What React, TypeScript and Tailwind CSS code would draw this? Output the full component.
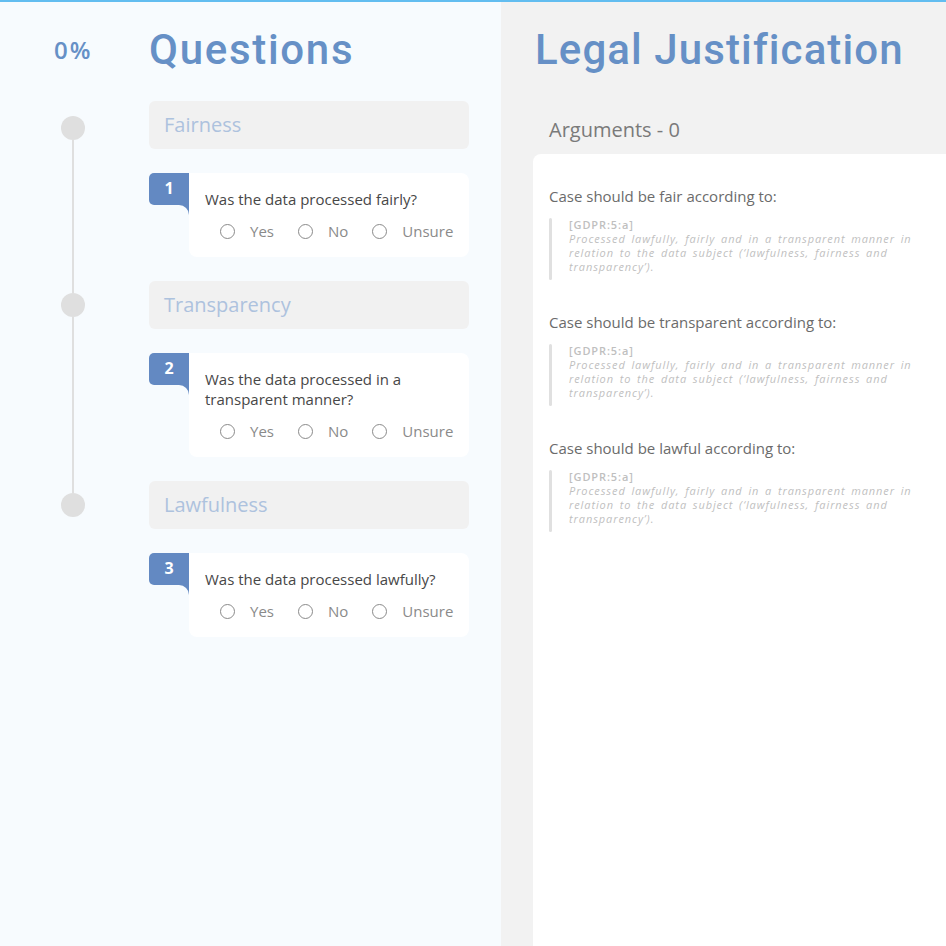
import React from 'react';

const questions = [
  { id: 1, category: 'Fairness', text: 'Was the data processed fairly?' },
  { id: 2, category: 'Transparency', text: 'Was the data processed in a transparent manner?' },
  { id: 3, category: 'Lawfulness', text: 'Was the data processed lawfully?' },
];

const justifications = ['fair', 'transparent', 'lawful'];

function Radio({ label }: { label: string }) {
  return (
    <label className="flex items-center gap-[15px]">
      <span className="h-[15px] w-[15px] shrink-0 rounded-full border border-[#8a8a8a] bg-white" />
      <span className="text-[15px] leading-[22px] text-[#8a8a8a]">{label}</span>
    </label>
  );
}

function QuestionCard({ id, text }: { id: number; text: string }) {
  return (
    <div className="flex">
      <div className="flex w-10 shrink-0 flex-col">
        <div className="flex h-8 justify-center rounded-l-[5px] bg-[#6389c2] pt-[5px] text-[16px] font-bold leading-[20px] text-white">
          {id}
        </div>
        <div className="h-[10px] w-[10px] self-end bg-[#6389c2]">
          <div className="h-full w-full rounded-tr-[10px] bg-[#f7fbfe]" />
        </div>
      </div>
      <div className="min-w-0 flex-1 rounded-r-lg rounded-bl-lg bg-white px-4 pb-[15px] pt-4">
        <p className="pr-4 text-[15px] leading-5 text-[#474747]">{text}</p>
        <div className="mt-[11px] flex gap-6 pl-[15px]">
          <Radio label="Yes" />
          <Radio label="No" />
          <Radio label="Unsure" />
        </div>
      </div>
    </div>
  );
}

export default function App() {
  return (
    <div className="flex min-h-screen flex-col font-['Open_Sans',sans-serif]">
      <div className="h-[2px] bg-[#62bdf0]" />
      <div className="flex flex-1">
        {/* questions */}
        <main className="w-[501px] bg-[#f7fbfe] pb-10">
          <header className="flex items-center pt-[23px]">
            <span className="w-[149px] pl-[54px] text-[24px] font-semibold tracking-[2px] text-[#6690c6]">
              0%
            </span>
            <h1 className="font-['Roboto',sans-serif] text-[42px] font-medium leading-[50px] tracking-[1.7px] text-[#6690c6]">
              Questions
            </h1>
          </header>
          <div className="flex pt-[26px]">
            <div className="ml-[61px] mr-[64px] flex w-6 flex-col items-center pt-[15px]">
              <span className="h-6 w-6 rounded-full bg-[#dfdfdf]" />
              <span className="h-[153px] w-0.5 bg-[#dfdfdf]" />
              <span className="h-6 w-6 rounded-full bg-[#dfdfdf]" />
              <span className="h-[176px] w-0.5 bg-[#dfdfdf]" />
              <span className="h-6 w-6 rounded-full bg-[#dfdfdf]" />
            </div>
            <div className="flex w-[320px] flex-col gap-6">
              {questions.map(q => (
                <React.Fragment key={q.id}>
                  <div className="flex h-12 items-center rounded-md bg-[#f1f1f1] px-[15px] text-[20px] text-[#adc2de]">
                    {q.category}
                  </div>
                  <QuestionCard id={q.id} text={q.text} />
                </React.Fragment>
              ))}
            </div>
          </div>
        </main>

        {/* legal justification */}
        <aside className="flex flex-1 flex-col bg-[#f2f2f2] pl-8">
          <h1 className="pl-[2px] pt-[23px] font-['Roboto',sans-serif] text-[42px] font-medium leading-[50px] tracking-[1.1px] text-[#6690c6]">
            Legal Justification
          </h1>
          <h2 className="mt-[41px] pl-4 text-[20px] leading-7 text-[#7a7a7a]">Arguments - 0</h2>
          <section className="mt-[10px] flex-1 rounded-tl-lg bg-white pl-4 pr-4 pt-8">
            {justifications.map(j => (
              <div key={j} className="mb-8">
                <p className="text-[15px] leading-5 text-[#6b6b6b]">Case should be {j} according to:</p>
                <blockquote className="mt-3 flex">
                  <span className="w-[3px] rounded-sm bg-[#e0e0e0]" />
                  <div className="whitespace-nowrap pb-[6px] pl-[17px] text-[11px] leading-[14px] tracking-[0.9px] text-[#bfbfbf]">
                    <p className="font-semibold">[GDPR:5:a]</p>
                    <p className="italic [word-spacing:2px]">
                      Processed lawfully, fairly and in a transparent manner in
                      <br />
                      relation to the data subject (‘lawfulness, fairness and
                      <br />
                      transparency’).
                    </p>
                  </div>
                </blockquote>
              </div>
            ))}
          </section>
        </aside>
      </div>
    </div>
  );
}
